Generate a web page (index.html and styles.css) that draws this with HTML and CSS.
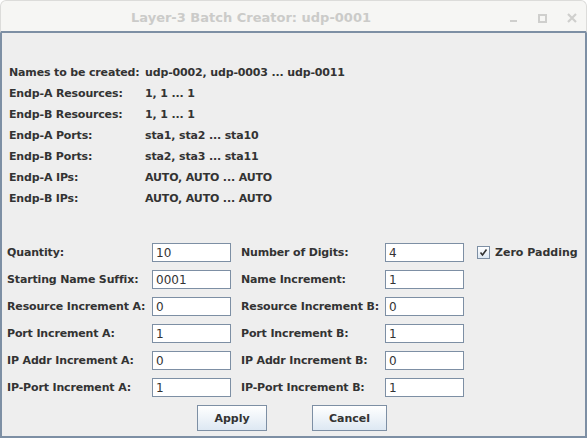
FILE: index.html
```html
<!DOCTYPE html>
<html lang="en">
<head>
  <meta charset="UTF-8">
  <title>Layer-3 Batch Creator: udp-0001</title>
  <link rel="stylesheet" href="styles.css">
</head>
<body>
  <div class="window">
    <div class="titlebar">
      <span class="title">Layer-3 Batch Creator: udp-0001</span>
      <div class="controls">
        <svg width="8" height="8" viewBox="0 0 8 8"><rect x="0" y="6" width="7" height="2" fill="#cfcfcd"/></svg>
        <svg width="9" height="9" viewBox="0 0 9 9"><rect x="1" y="1" width="7" height="7" fill="none" stroke="#cfcfcd" stroke-width="2"/></svg>
        <svg width="10" height="10" viewBox="0 0 10 10"><path d="M1 1L9 9M9 1L1 9" stroke="#cfcfcd" stroke-width="2.2"/></svg>
      </div>
    </div>

    <div class="content">
      <div class="info">
        <span>Names to be created:</span><span>udp-0002, udp-0003 ... udp-0011</span>
        <span>Endp-A Resources:</span><span>1, 1 ... 1</span>
        <span>Endp-B Resources:</span><span>1, 1 ... 1</span>
        <span>Endp-A Ports:</span><span>sta1, sta2 ... sta10</span>
        <span>Endp-B Ports:</span><span>sta2, sta3 ... sta11</span>
        <span>Endp-A IPs:</span><span>AUTO, AUTO ... AUTO</span>
        <span>Endp-B IPs:</span><span>AUTO, AUTO ... AUTO</span>
      </div>

      <div class="form">
        <label>Quantity:</label><input value="10">
        <label>Number of Digits:</label><input value="4">
        <div class="check">
          <span class="box"><svg width="9" height="9" viewBox="0 0 9 9"><path d="M1.5 4.5L3.5 7L7.5 1.5" fill="none" stroke="#333" stroke-width="1.6"/></svg></span>Zero Padding
        </div>

        <label>Starting Name Suffix:</label><input value="0001">
        <label>Name Increment:</label><input value="1"><div></div>

        <label>Resource Increment A:</label><input value="0">
        <label>Resource Increment B:</label><input value="0"><div></div>

        <label>Port Increment A:</label><input value="1">
        <label>Port Increment B:</label><input value="1"><div></div>

        <label>IP Addr Increment A:</label><input value="0">
        <label>IP Addr Increment B:</label><input value="0"><div></div>

        <label>IP-Port Increment A:</label><input value="1">
        <label>IP-Port Increment B:</label><input value="1"><div></div>
      </div>

      <div class="buttons">
        <button class="apply">Apply</button>
        <button class="cancel">Cancel</button>
      </div>
    </div>
  </div>
</body>
</html>
```

FILE: styles.css
```css
body {
  margin: 0;
  background: #ffffff;
  font-family: "DejaVu Sans", sans-serif;
  color: #333333;
}

.window {
  width: 587px;
  height: 438px;
  box-sizing: border-box;
  background: #eeeeee;
  border-radius: 6px 6px 0 0;
  overflow: hidden;
  display: flex;
  flex-direction: column;
}

.titlebar {
  height: 33px;
  box-sizing: border-box;
  background: #f6f6f4;
  border: 1px solid #dcdcda;
  border-bottom: 2px solid #7d8fa4;
  border-radius: 6px 6px 0 0;
  display: flex;
  align-items: center;
  justify-content: center;
  position: relative;
}

.title {
  font-size: 13px;
  font-weight: bold;
  color: #cbcbc9;
  margin-left: -85px;
  margin-top: 3px;
}

.controls {
  position: absolute;
  right: 9px;
  top: 12px;
  display: flex;
  align-items: center;
  gap: 20px;
}

.content {
  flex: 1;
  border-left: 2px solid #7d8fa4;
  border-right: 2px solid #7d8fa4;
  border-bottom: 2px solid #7d8fa4;
  padding: 32px 0 0 5px;
}

.info {
  display: grid;
  grid-template-columns: 136px auto;
  row-gap: 5px;
  padding-left: 2px;
  font-size: 11px;
  font-weight: bold;
  line-height: 16px;
  letter-spacing: -0.15px;
}

.form {
  display: grid;
  grid-template-columns: 145px 89px 144px 89px auto;
  grid-auto-rows: 19px;
  row-gap: 8px;
  align-items: center;
  margin-top: 36px;
  font-size: 11px;
  font-weight: bold;
}

.form label {
  white-space: nowrap;
  letter-spacing: -0.15px;
}

.form input {
  width: 79px;
  height: 19px;
  box-sizing: border-box;
  border: 1px solid #7d8fa4;
  background: #ffffff;
  padding: 0 3px;
  font-family: "DejaVu Sans", sans-serif;
  font-size: 12px;
  color: #333333;
  outline: none;
}

.check {
  display: flex;
  align-items: center;
  gap: 5px;
  margin-left: 3px;
  white-space: nowrap;
}

.box {
  width: 11px;
  height: 11px;
  border: 1px solid #7d8fa4;
  background: linear-gradient(#ffffff, #dde8f3);
  display: flex;
  align-items: center;
  justify-content: center;
}

.buttons {
  display: flex;
  justify-content: center;
  gap: 45px;
  margin-top: 8px;
  padding-right: 8px;
}

button {
  height: 26px;
  border: 1px solid #7d8fa4;
  background: linear-gradient(#ffffff, #dde8f3);
  font-family: "DejaVu Sans", sans-serif;
  font-size: 11px;
  font-weight: bold;
  color: #333333;
  padding: 0;
}

.apply {
  width: 70px;
}

.cancel {
  width: 75px;
}
```
